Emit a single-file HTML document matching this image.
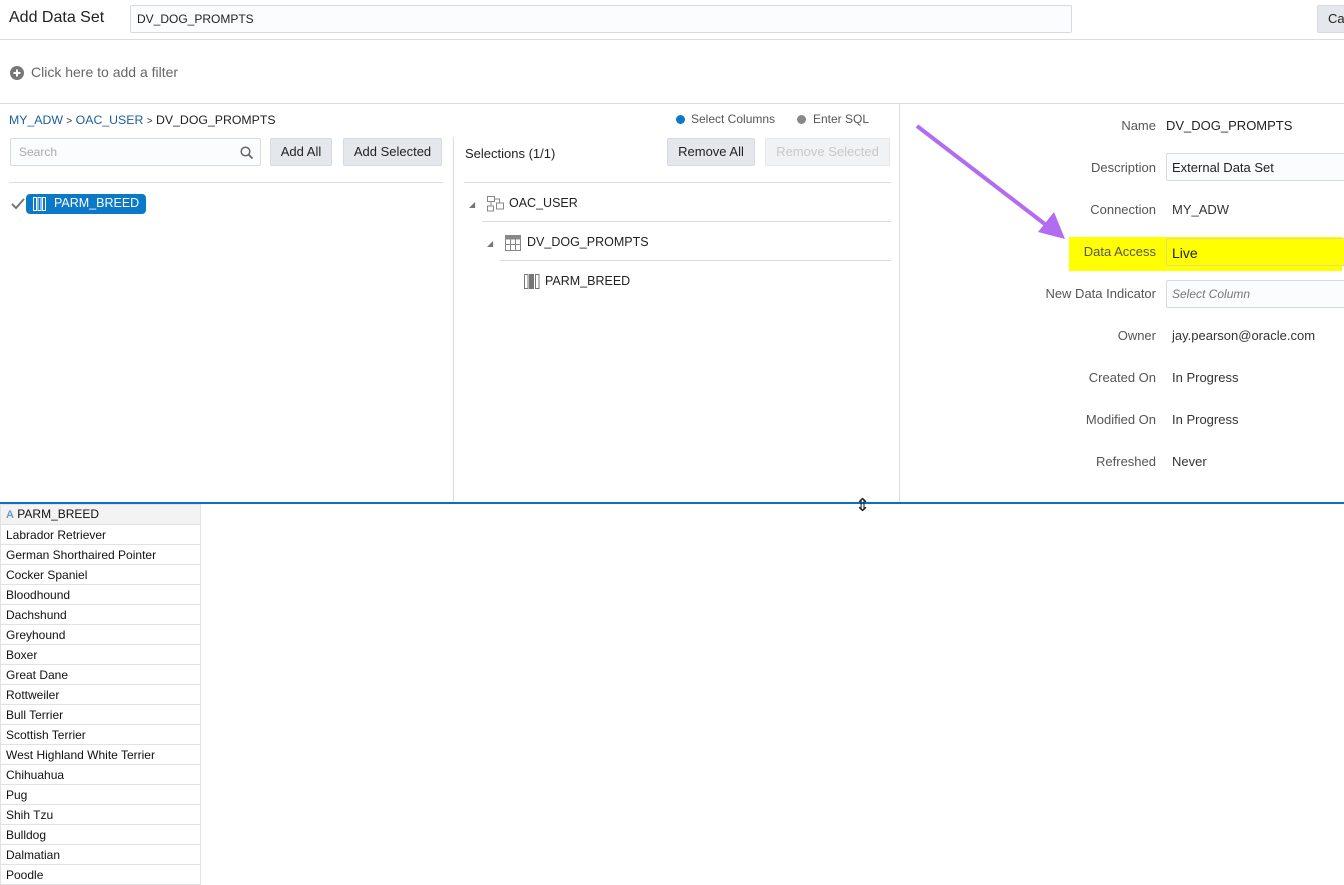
<!DOCTYPE html>
<html><head><meta charset="utf-8"><style>
*{box-sizing:border-box;margin:0;padding:0}
body{width:1344px;height:885px;overflow:hidden;background:#fff;font-family:"Liberation Sans",sans-serif;color:#333;position:relative;font-size:13px}
.a{position:absolute;white-space:nowrap}
.btn{position:absolute;background:#e4e8ec;border:1px solid #d6dbe0;border-radius:2px;font-size:13px;color:#222;text-align:center;line-height:26px;height:28px}
.hl{position:absolute;height:1px;background:#d9dde1}
.lbl{position:absolute;right:188px;font-size:13px;color:#555;text-align:right}
.val{position:absolute;left:1172px;font-size:13px;color:#333}
.inp{position:absolute;left:1166px;width:190px;height:28px;border:1px solid #d6dbe0;border-radius:2px;background:#fbfcfd}
table{position:absolute;left:0;top:504px;border-collapse:collapse;width:201px}
td{border:1px solid #e2e2e2;height:20px;font-size:12px;color:#111;padding:0 5px;line-height:18px}
</style></head><body>
<div class="a" style="left:9px;top:9px;font-size:16px;color:#222">Add Data Set</div>
<div class="a" style="left:130px;top:5px;width:942px;height:28px;border:1px solid #d6dbe0;border-radius:2px;background:#fbfcfd;font-size:12px;line-height:26px;padding-left:6px;color:#222">DV_DOG_PROMPTS</div>
<div class="btn" style="left:1317px;top:5px;width:40px;text-align:left;padding-left:10px;font-size:13px">Ca</div>
<div class="hl" style="left:0;top:39px;width:1344px"></div>
<svg class="a" style="left:10px;top:66px" width="14" height="14"><circle cx="7" cy="7" r="7" fill="#777"/><path d="M7 3.5v7M3.5 7h7" stroke="#fff" stroke-width="2"/></svg>
<div class="a" style="left:31px;top:64px;font-size:14px;color:#666">Click here to add a filter</div>
<div class="hl" style="left:0;top:103px;width:1344px"></div>

<div class="a" style="left:9px;top:113px;font-size:12.3px"><span style="color:#1c5e9c">MY_ADW</span> <span style="font-size:10px">&gt;</span> <span style="color:#1c5e9c">OAC_USER</span> <span style="font-size:10px">&gt;</span> <span style="color:#222">DV_DOG_PROMPTS</span></div>
<div class="a" style="left:10px;top:138px;width:251px;height:28px;border:1px solid #d6dbe0;border-radius:2px;background:#fbfcfd;color:#aaa;font-size:12px;line-height:26px;padding-left:8px">Search</div>
<svg class="a" style="left:240px;top:146px" width="14" height="14"><circle cx="5.5" cy="5.5" r="4.3" fill="none" stroke="#666" stroke-width="1.5"/><path d="M8.5 8.5l4 4" stroke="#666" stroke-width="1.8"/></svg>
<div class="btn" style="left:270px;top:138px;width:62px">Add All</div>
<div class="btn" style="left:343px;top:138px;width:99px">Add Selected</div>
<div class="hl" style="left:9px;top:182px;width:434px"></div>
<svg class="a" style="left:11px;top:198px" width="14" height="12"><path d="M1 6l4 4 8-9" stroke="#777" stroke-width="2" fill="none"/></svg>
<div class="a" style="left:26px;top:194px;width:120px;height:20px;background:#0b79c8;border-radius:4px;color:#fff;font-size:12.5px;line-height:19px;padding-left:28px">PARM_BREED</div>
<svg class="a" style="left:33px;top:197px" width="14" height="14"><rect x="0.5" y="0.5" width="3" height="13" fill="none" stroke="#fff"/><rect x="5" y="0.5" width="3" height="13" fill="none" stroke="#fff"/><rect x="9.5" y="0.5" width="3" height="13" fill="none" stroke="#fff"/></svg>

<div class="a" style="left:453px;top:137px;width:1px;height:366px;background:#d9dde1"></div>
<div class="a" style="left:899px;top:104px;width:1px;height:399px;background:#d9dde1"></div>

<div class="a" style="left:676px;top:115px;width:9px;height:9px;border-radius:50%;background:#0b79c8"></div>
<div class="a" style="left:691px;top:112px;font-size:12px;color:#555">Select Columns</div>
<div class="a" style="left:797px;top:115px;width:9px;height:9px;border-radius:50%;background:#888"></div>
<div class="a" style="left:813px;top:112px;font-size:12px;color:#555">Enter SQL</div>
<div class="a" style="left:465px;top:146px;font-size:13px;color:#222">Selections (1/1)</div>
<div class="btn" style="left:667px;top:138px;width:88px">Remove All</div>
<div class="btn" style="left:765px;top:138px;width:125px;background:#f0f2f4;border-color:#e5e8ea;color:#c8c8c8">Remove Selected</div>
<div class="hl" style="left:464px;top:182px;width:427px"></div>
<div class="a" style="left:469px;top:200px;font-size:8px;color:#777">◢</div>
<svg class="a" style="left:487px;top:196px" width="17" height="16"><rect x="0.5" y="0.5" width="7" height="5" fill="none" stroke="#888"/><rect x="0.5" y="10" width="6" height="5" fill="none" stroke="#888"/><rect x="9.5" y="7" width="7" height="6" fill="none" stroke="#888"/><path d="M4 5.5v4.5M7.5 3h5v4" stroke="#888" fill="none"/></svg>
<div class="a" style="left:509px;top:196px;font-size:12.5px;color:#222">OAC_USER</div>
<div class="hl" style="left:482px;top:221px;width:409px"></div>
<div class="a" style="left:487px;top:239px;font-size:8px;color:#777">◢</div>
<svg class="a" style="left:505px;top:235px" width="16" height="16"><rect x="0.5" y="0.5" width="15" height="15" fill="#fff" stroke="#888"/><rect x="0.5" y="0.5" width="15" height="4" fill="#888"/><path d="M5.5 4v12M10.5 4v12M0 9.5h16" stroke="#888"/></svg>
<div class="a" style="left:527px;top:235px;font-size:12.5px;color:#222">DV_DOG_PROMPTS</div>
<div class="hl" style="left:500px;top:260px;width:391px"></div>
<svg class="a" style="left:524px;top:274px" width="16" height="15"><rect x="0.5" y="0.5" width="3.5" height="14" fill="none" stroke="#777"/><rect x="5.5" y="0.5" width="4" height="14" fill="#777" stroke="#777"/><rect x="11.5" y="0.5" width="3.5" height="14" fill="none" stroke="#777"/></svg>
<div class="a" style="left:545px;top:274px;font-size:12.5px;color:#222">PARM_BREED</div>

<div class="a" style="left:1069px;top:237px;width:273px;height:34px;background:#ffff00"></div>
<svg class="a" style="left:900px;top:110px" width="180" height="140"><path d="M17 16L150 118" stroke="#b16cf2" stroke-width="4"/><path d="M165 129L138 122L154 102Z" fill="#b16cf2"/></svg>
<div class="lbl" style="top:118px">Name</div><div class="a" style="left:1166px;top:118px;font-size:13px;color:#222">DV_DOG_PROMPTS</div>
<div class="lbl" style="top:160px">Description</div><div class="inp" style="top:153px"></div><div class="val" style="top:160px;color:#222">External Data Set</div>
<div class="lbl" style="top:202px">Connection</div><div class="val" style="top:202px">MY_ADW</div>
<div class="lbl" style="top:244px;color:#555">Data Access</div><div class="inp" style="top:238px;background:#ffff00;border-color:#e0e070"></div><div class="val" style="top:245px;color:#222;font-size:14px">Live</div>
<div class="lbl" style="top:286px">New Data Indicator</div><div class="inp" style="top:280px"></div><div class="val" style="top:287px;font-size:12px;font-style:italic;color:#777">Select Column</div>
<div class="lbl" style="top:328px">Owner</div><div class="val" style="top:328px">jay.pearson@oracle.com</div>
<div class="lbl" style="top:370px">Created On</div><div class="val" style="top:370px">In Progress</div>
<div class="lbl" style="top:412px">Modified On</div><div class="val" style="top:412px">In Progress</div>
<div class="lbl" style="top:454px">Refreshed</div><div class="val" style="top:454px">Never</div>

<div class="a" style="left:0;top:502px;width:1344px;height:2px;background:#0b6fc4"></div>
<div class="a" style="left:855px;top:495px;font-size:18px;line-height:20px;color:#222">⇕</div>
<table>
<tr><td style="background:#f3f3f3"><span style="color:#6a9bc9;font-weight:bold;font-size:11px">A</span> PARM_BREED</td></tr>
<tr><td>Labrador Retriever</td></tr><tr><td>German Shorthaired Pointer</td></tr><tr><td>Cocker Spaniel</td></tr><tr><td>Bloodhound</td></tr><tr><td>Dachshund</td></tr><tr><td>Greyhound</td></tr><tr><td>Boxer</td></tr><tr><td>Great Dane</td></tr><tr><td>Rottweiler</td></tr><tr><td>Bull Terrier</td></tr><tr><td>Scottish Terrier</td></tr><tr><td>West Highland White Terrier</td></tr><tr><td>Chihuahua</td></tr><tr><td>Pug</td></tr><tr><td>Shih Tzu</td></tr><tr><td>Bulldog</td></tr><tr><td>Dalmatian</td></tr><tr><td>Poodle</td></tr>
</table>
</body></html>
